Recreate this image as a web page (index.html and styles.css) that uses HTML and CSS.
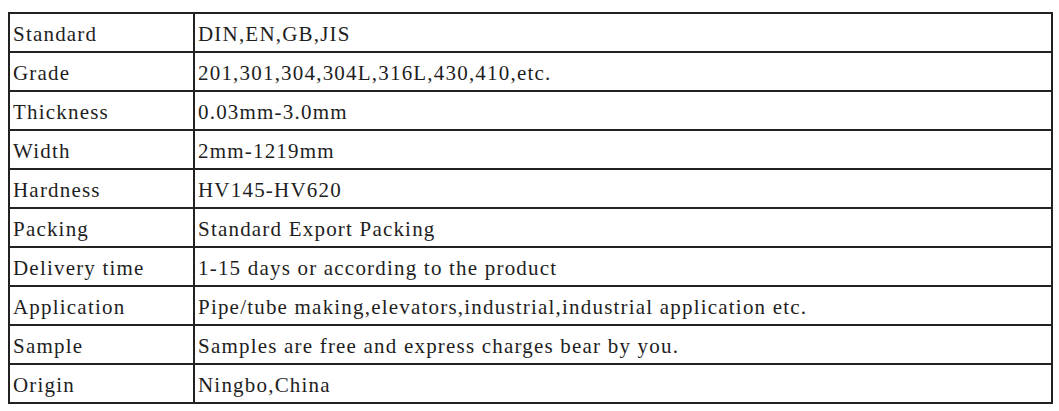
FILE: index.html
```html
<!DOCTYPE html>
<html>
<head>
<meta charset="utf-8">
<link rel="stylesheet" href="styles.css">
</head>
<body>
<table class="spec">
<tr><td class="k">Standard</td><td class="v">DIN,EN,GB,JIS</td></tr>
<tr><td class="k">Grade</td><td class="v">201,301,304,304L,316L,430,410,etc.</td></tr>
<tr><td class="k">Thickness</td><td class="v">0.03mm-3.0mm</td></tr>
<tr><td class="k">Width</td><td class="v">2mm-1219mm</td></tr>
<tr><td class="k">Hardness</td><td class="v">HV145-HV620</td></tr>
<tr><td class="k">Packing</td><td class="v">Standard Export Packing</td></tr>
<tr><td class="k">Delivery time</td><td class="v">1-15 days or according to the product</td></tr>
<tr><td class="k">Application</td><td class="v">Pipe/tube making,elevators,industrial,industrial application etc.</td></tr>
<tr><td class="k">Sample</td><td class="v">Samples are free and express charges bear by you.</td></tr>
<tr><td class="k">Origin</td><td class="v">Ningbo,China</td></tr>
</table>
</body>
</html>
```
FILE: styles.css
```css
html, body {
  margin: 0;
  background: #fff;
}
body {
  padding: 12px 0 0 8px;
  font-family: "Liberation Serif", "Times New Roman", serif;
  font-size: 21px;
  letter-spacing: 1.2px;
  color: #1e1e1e;
}
.spec {
  border-collapse: collapse;
  width: 1045px;
  table-layout: fixed;
}
.spec td {
  border: 2px solid #222;
  height: 35px;
  padding: 2px 2px 0 3px;
  vertical-align: middle;
  white-space: nowrap;
  line-height: 24px;
}
.spec .k {
  width: 178px;
}
```
